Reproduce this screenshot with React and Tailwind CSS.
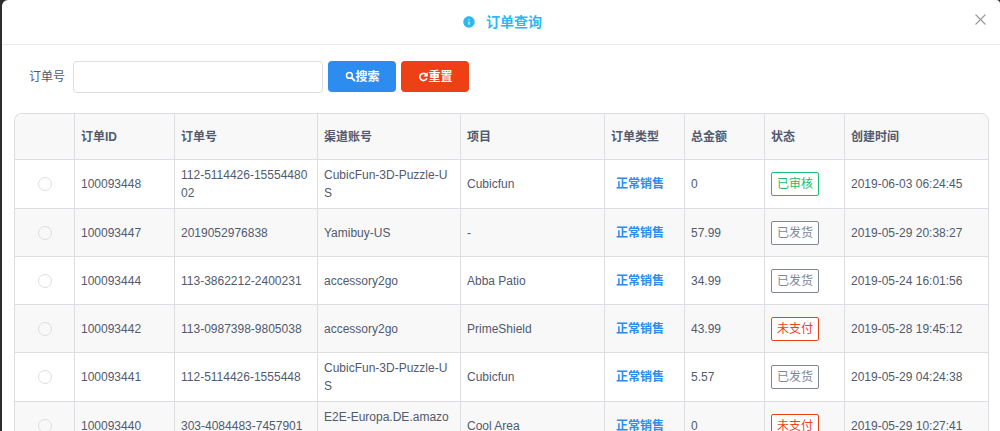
import { useState } from "react";
import clsx from "clsx";
import { IoMdInformationCircle } from "react-icons/io";

const ORDERS = [
  {
    id: "100093448",
    orderNo: "112-5114426-1555448002",
    account: "CubicFun-3D-Puzzle-US",
    project: "Cubicfun",
    total: "0",
    status: "已审核",
    createdAt: "2019-06-03 06:24:45",
  },
  {
    id: "100093447",
    orderNo: "2019052976838",
    account: "Yamibuy-US",
    project: "-",
    total: "57.99",
    status: "已发货",
    createdAt: "2019-05-29 20:38:27",
  },
  {
    id: "100093444",
    orderNo: "113-3862212-2400231",
    account: "accessory2go",
    project: "Abba Patio",
    total: "34.99",
    status: "已发货",
    createdAt: "2019-05-24 16:01:56",
  },
  {
    id: "100093442",
    orderNo: "113-0987398-9805038",
    account: "accessory2go",
    project: "PrimeShield",
    total: "43.99",
    status: "未支付",
    createdAt: "2019-05-28 19:45:12",
  },
  {
    id: "100093441",
    orderNo: "112-5114426-1555448",
    account: "CubicFun-3D-Puzzle-US",
    project: "Cubicfun",
    total: "5.57",
    status: "已发货",
    createdAt: "2019-05-29 04:24:38",
  },
  {
    id: "100093440",
    orderNo: "303-4084483-7457901",
    account: "E2E-Europa.DE.amazon",
    project: "Cool Area",
    total: "0",
    status: "未支付",
    createdAt: "2019-05-29 10:27:41",
  },
];

const COLUMNS = [
  { title: "", width: "w-[60px]" },
  { title: "订单ID", width: "w-[100px]" },
  { title: "订单号", width: "w-[143px]" },
  { title: "渠道账号", width: "w-[143px]" },
  { title: "项目" },
  { title: "订单类型", width: "w-[80px]" },
  { title: "总金额", width: "w-[80px]" },
  { title: "状态", width: "w-[80px]" },
  { title: "创建时间" },
];

const STATUS_STYLES = {
  已审核: "border-[#19be6b] text-[#19be6b]",
  已发货: "border-[#808695] text-[#808695]",
  未支付: "border-[#ed4014] text-[#ed4014]",
};

function App() {
  const [orderNo, setOrderNo] = useState("");
  const [keyword, setKeyword] = useState("");
  const [selectedId, setSelectedId] = useState(null);

  const orders = ORDERS.filter((order) => order.orderNo.includes(keyword));

  const handleSubmit = (event) => {
    event.preventDefault();
    setKeyword(orderNo.trim());
  };

  const handleReset = () => {
    setOrderNo("");
    setKeyword("");
  };

  return (
    <div className="h-screen overflow-hidden bg-[#2d2d30] pl-0.5 font-['Liberation_Sans','Noto_Sans_CJK_SC',sans-serif] text-xs text-[#515a6e]">
      <div className="min-h-full rounded-tl-md rounded-tr-sm bg-white">
        <header className="relative flex h-[45px] items-center justify-center border-b border-[#e8eaec] pl-0.5">
          <h1 className="flex items-center gap-2.5 text-sm font-bold text-[#2db7f5]">
            <IoMdInformationCircle className="size-3.5" />
            订单查询
          </h1>
          <button
            type="button"
            aria-label="关闭"
            className="absolute top-3 right-3 p-0.5 text-[#999] hover:text-[#444]"
          >
            <CloseIcon className="size-[11px]" />
          </button>
        </header>

        <div className="pt-4 pr-[11px] pl-3">
          <form onSubmit={handleSubmit} className="flex items-start pl-[15px]">
            <label htmlFor="order-no" className="mr-2 leading-8">
              订单号
            </label>
            <input
              id="order-no"
              type="text"
              value={orderNo}
              onChange={(event) => setOrderNo(event.target.value)}
              className="h-8 w-[250px] rounded border border-[#dcdee2] px-2 outline-none focus:border-[#57a3f3]"
            />
            <button
              type="submit"
              className="ml-[5px] flex h-[31px] w-[68px] items-center justify-center rounded bg-[#2d8cf0] font-bold text-white"
            >
              <SearchIcon className="size-[11px]" />
              搜索
            </button>
            <button
              type="button"
              onClick={handleReset}
              className="ml-[5px] flex h-[31px] w-[68px] items-center justify-center rounded bg-[#ed4014] font-bold text-white"
            >
              <RefreshIcon className="size-[11px]" />
              重置
            </button>
          </form>

          <div className="mt-5 overflow-hidden rounded-t-lg border-t border-l border-[#dcdee2]">
            <table className="w-full table-fixed border-separate border-spacing-0">
              <thead>
                <tr className="h-[46px] bg-[#f8f8f9]">
                  {COLUMNS.map((column, index) => (
                    <th
                      key={column.title || "select"}
                      className={clsx(
                        "border-r border-b border-[#dcdee2] px-1.5 text-left font-bold",
                        index === COLUMNS.length - 1 && "rounded-tr-lg",
                        column.width
                      )}
                    >
                      {column.title}
                    </th>
                  ))}
                </tr>
              </thead>
              <tbody>
                {orders.map((order) => (
                  <OrderRow
                    key={order.id}
                    order={order}
                    isSelected={order.id === selectedId}
                    onSelect={() => setSelectedId(order.id)}
                  />
                ))}
              </tbody>
            </table>
          </div>
        </div>
      </div>
    </div>
  );
}

function OrderRow({ order, isSelected, onSelect }) {
  return (
    <tr className="h-12 bg-white even:bg-[#f8f8f9]">
      <Cell>
        <input
          type="radio"
          name="order"
          aria-label={order.id}
          checked={isSelected}
          onChange={onSelect}
          className="mx-auto block size-3.5 appearance-none rounded-full border border-[#dcdee2] checked:border-4 checked:border-[#2d8cf0]"
        />
      </Cell>
      <Cell>{order.id}</Cell>
      <Cell>{order.orderNo}</Cell>
      <Cell>{order.account}</Cell>
      <Cell>{order.project}</Cell>
      <Cell>
        <span className="px-[5px] font-bold text-[#2d8cf0]">正常销售</span>
      </Cell>
      <Cell>{order.total}</Cell>
      <Cell>
        <span
          className={clsx(
            "flex h-6 w-fit items-center rounded-xs border bg-white px-[5px]",
            STATUS_STYLES[order.status]
          )}
        >
          {order.status}
        </span>
      </Cell>
      <Cell>{order.createdAt}</Cell>
    </tr>
  );
}

function Cell({ children }) {
  return (
    <td className="border-r border-b border-[#dcdee2] px-1.5 py-1.5 leading-[18px] break-all">
      {children}
    </td>
  );
}

function CloseIcon({ className }) {
  return (
    <svg viewBox="0 0 11 11" className={className} fill="none" stroke="currentColor">
      <path d="M0.5 0.5 10.5 10.5M10.5 0.5 0.5 10.5" strokeWidth="1.1" />
    </svg>
  );
}

function SearchIcon({ className }) {
  return (
    <svg viewBox="0 0 11 11" className={className} fill="none" stroke="currentColor">
      <circle cx="4.4" cy="4.4" r="2.9" strokeWidth="1.5" />
      <path d="M6.6 6.6 10 10" strokeWidth="1.9" />
    </svg>
  );
}

function RefreshIcon({ className }) {
  return (
    <svg viewBox="0 0 11 11" className={className} fill="none" stroke="currentColor">
      <path d="M8 3.4A3.6 3.6 0 1 0 8.8 7.2" strokeWidth="1.7" />
      <path d="M9.8 1V5.4H5.4Z" fill="currentColor" stroke="none" />
    </svg>
  );
}

export default App;
